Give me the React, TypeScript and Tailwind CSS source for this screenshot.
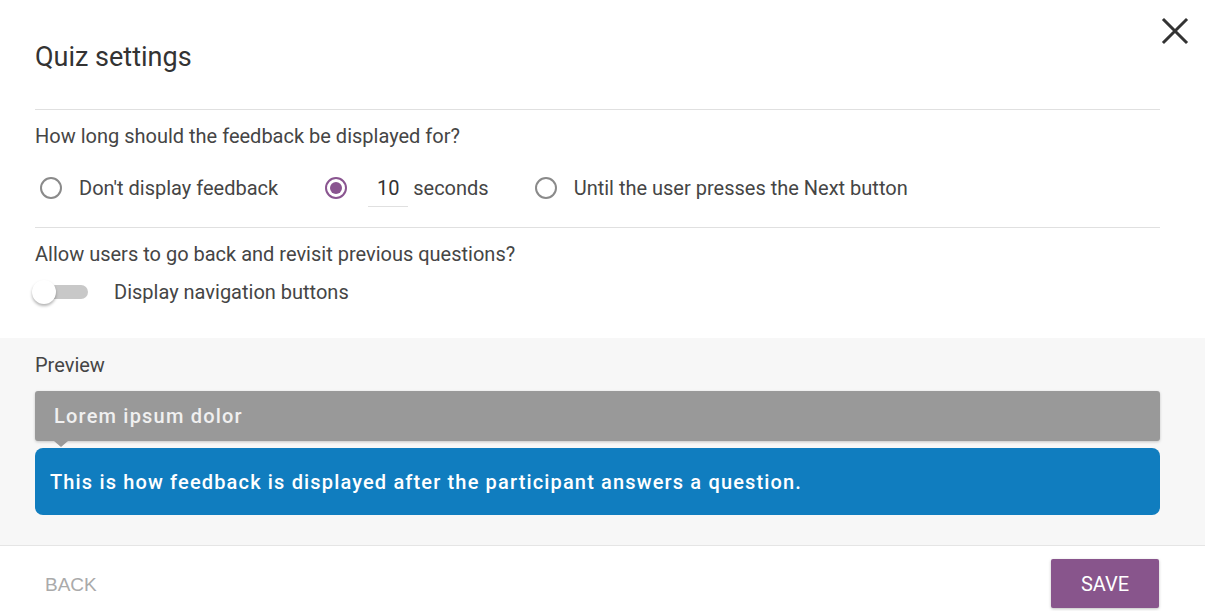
import React from "react"

function Radio({ checked }: { checked?: boolean }) {
  return (
    <span
      className={
        "flex h-[22px] w-[22px] shrink-0 items-center justify-center rounded-full border-2 " +
        (checked ? "border-[#8a5590]" : "border-[#8a8a8a]")
      }
    >
      {checked && <span className="h-[12px] w-[12px] rounded-full bg-[#8a5590]" />}
    </span>
  )
}

export default function App() {
  return (
    <div className="relative min-h-[611px] w-full bg-white text-[#454545] font-['Roboto',sans-serif]">
      {/* close */}
      <button className="absolute right-[16px] top-[17px] text-[#333]">
        <svg width="28" height="28" viewBox="0 0 28 28" fill="none" stroke="currentColor" strokeWidth="3" strokeLinecap="square">
          <path d="M3 3 L25 25 M25 3 L3 25" />
        </svg>
      </button>

      <div className="pl-[35px] pr-[45px]">
        <h1 className="pt-[38px] text-[27px] leading-[38px] text-[#333]">Quiz settings</h1>
        <div className="mt-[33px] h-px bg-[#e0e0e0]" />

        <p className="pt-[14px] text-[20px] leading-[24px]">How long should the feedback be displayed for?</p>
        <div className="mt-[20px] flex h-[40px] items-center text-[20px]">
          <label className="ml-[5px] flex items-center gap-[17px]">
            <Radio />
            <span>Don't display feedback</span>
          </label>
          <label className="ml-[47px] flex items-center">
            <Radio checked />
            <span className="ml-[21px] flex h-[38px] w-[40px] items-center justify-center border-b border-[#e0e0e0] text-[#333]">10</span>
            <span className="ml-[5px]">seconds</span>
          </label>
          <label className="ml-[46px] flex items-center gap-[17px]">
            <Radio />
            <span>Until the user presses the Next button</span>
          </label>
        </div>
        <div className="mt-[19px] h-px bg-[#e0e0e0]" />

        <p className="pt-[14px] text-[20px] leading-[24px]">Allow users to go back and revisit previous questions?</p>
        <div className="mt-[11px] mb-[31px] flex h-[30px] items-center">
          <span className="relative -ml-[2px] flex h-[14px] w-[55px] items-center rounded-full bg-[#c8c8c8]">
            <span className="absolute left-[-1px] top-[-5px] h-[24px] w-[24px] rounded-full bg-white shadow-[0_2px_3px_rgba(0,0,0,0.3)]" />
          </span>
          <span className="ml-[26px] text-[20px]">Display navigation buttons</span>
        </div>
      </div>

      <section className="border-b border-[#e5e5e5] bg-[#f7f7f7] pl-[35px] pr-[45px] pt-[15px] pb-[30px]">
        <p className="text-[20px] leading-[24px]">Preview</p>
        <div className="relative mt-[14px] flex h-[50px] items-center rounded-[3px] bg-[#999999] pl-[19px] shadow-[0_1px_3px_rgba(0,0,0,0.2)]">
          <span className="text-[20px] font-medium tracking-[1.2px] text-[#f0f0f0]">Lorem ipsum dolor</span>
          <span className="absolute left-[19px] top-[50px] h-0 w-0 border-x-[7px] border-t-[6px] border-x-transparent border-t-[#999999]" />
        </div>
        <div className="mt-[7px] flex h-[67px] items-center rounded-[8px] bg-[#107dbf] pl-[15px]">
          <span className="text-[20px] font-medium tracking-[1.15px] text-white">
            This is how feedback is displayed after the participant answers a question.
          </span>
        </div>
      </section>

      <footer className="flex items-start justify-between pl-[45px] pr-[46px] pt-[13px] font-['Liberation_Sans',Arial,sans-serif]">
        <button className="mt-[2px] flex h-[49px] items-center text-[19px] text-[#aaaaaa]">BACK</button>
        <button className="flex h-[49px] w-[108px] items-center justify-center rounded-[2px] bg-[#88558c] text-[20px] text-white shadow-[0_1px_3px_rgba(0,0,0,0.25)] font-['Roboto',sans-serif]">
          SAVE
        </button>
      </footer>
    </div>
  )
}
